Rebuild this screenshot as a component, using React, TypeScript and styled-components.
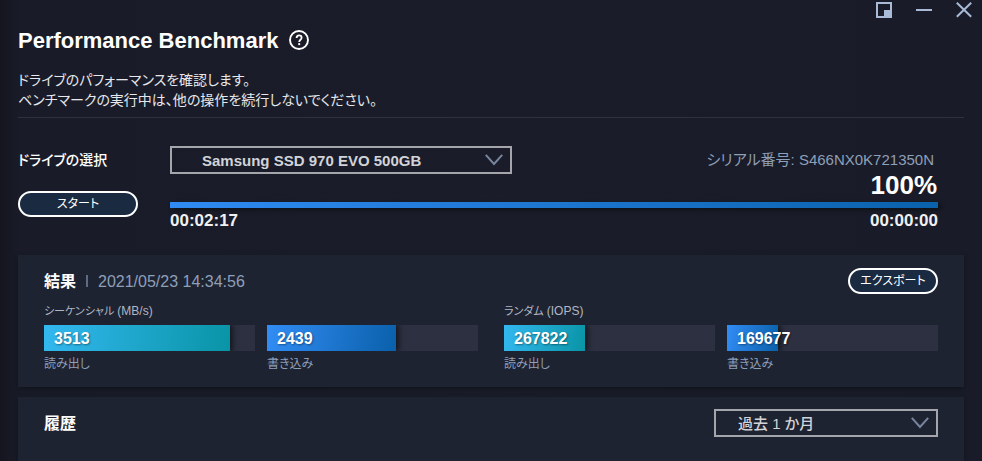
import React from "react";
import styled, { createGlobalStyle } from "styled-components";

const GlobalStyle = createGlobalStyle`
  *, *::before, *::after { box-sizing: border-box; }
  body {
    margin: 0;
    background: #191c28;
    color: #fff;
    font-family: "Liberation Sans", "Noto Sans CJK JP", sans-serif;
    font-feature-settings: "palt";
  }
  button, select { font: inherit; font-feature-settings: inherit; }
  h1, h2, h3, p { margin: 0; }
`;

const Window = styled.div`
  display: flex;
  flex-direction: column;
  min-height: 100vh;
  padding: 0 18px;
  background: linear-gradient(90deg, #15151f 0, #191c28 20px, #1a1d29 50%, #191c28 100%);
`;

const WindowBar = styled.div`
  display: flex;
  justify-content: flex-end;
  gap: 24px;
  height: 20px;
  margin-right: -8px;
  padding-top: 2px;
`;

const IconButton = styled.button`
  display: flex;
  align-items: center;
  padding: 0;
  border: 0;
  background: none;
  color: #a9bad6;
  cursor: pointer;
`;

const WindowButton = styled(IconButton)`
  height: 16px;
`;

const HelpButton = styled(IconButton)`
  height: 24px;
  color: #fff;
`;

const Header = styled.header`
  padding: 8px 0 7px;
  border-bottom: 1px solid #2e323d;
`;

const TitleRow = styled.div`
  display: flex;
  align-items: flex-start;
  gap: 11px;
  height: 24px;
  margin-bottom: 18px;
`;

const Title = styled.h1`
  font-size: 22px;
  line-height: 26px;
  font-weight: 700;
`;

const Description = styled.p`
  font-size: 14px;
  line-height: 20px;
  color: #e6e8ec;
`;

const Controls = styled.section`
  display: grid;
  grid-template-columns: 120px 1fr;
  column-gap: 32px;
  padding: 28px 26px 24px 0;
`;

const DriveLabel = styled.label`
  font-size: 14px;
  line-height: 28px;
  font-weight: 500;
`;

const DriveRow = styled.div`
  display: flex;
  justify-content: space-between;
  align-items: center;
`;

const Serial = styled.span`
  padding-right: 4px;
  font-size: 15px;
  line-height: 28px;
  color: #8e9fb8;
`;

const SelectBox = styled.div<{ $width: number }>`
  display: flex;
  position: relative;
  width: ${(p) => p.$width}px;
  height: 28px;

  svg {
    position: absolute;
    right: 8px;
    top: 8px;
    pointer-events: none;
  }
`;

const Select = styled.select<{ $inset: number; $weight: number }>`
  appearance: none;
  width: 100%;
  padding: 0 32px 0 ${(p) => p.$inset}px;
  border: 2px solid #a5a6ac;
  border-radius: 0;
  background: transparent;
  color: #d2d3d8;
  font-size: 15px;
  font-weight: ${(p) => p.$weight};

  option { background: #1e2332; }
`;

const PillButton = styled.button<{ $width: number }>`
  width: ${(p) => p.$width}px;
  height: 26px;
  padding: 0;
  border: 2px solid #fff;
  border-radius: 13px;
  background: #1a2b41;
  color: #fff;
  font-size: 12px;
  line-height: 22px;
  cursor: pointer;
`;

const StartCell = styled.div`
  padding-top: 17px;
`;

const Percent = styled.div`
  height: 28px;
  padding-right: 1px;
  font-size: 26px;
  line-height: 22px;
  font-weight: 700;
  text-align: right;
`;

const ProgressTrack = styled.div`
  height: 6px;
  background: #2c3040;
`;

const ProgressFill = styled.div`
  height: 100%;
  background: linear-gradient(90deg, #308af2, #0a62ad);
  box-shadow: 3px 2px 4px rgba(0, 0, 0, 0.45);
`;

const Times = styled.div`
  display: flex;
  justify-content: space-between;
  padding-top: 3px;
  font-size: 17px;
  line-height: 20px;
  font-weight: 700;
  color: #f0f0f2;
`;

const Panel = styled.section<{ $fill?: boolean }>`
  flex: ${(p) => (p.$fill ? "1 0 auto" : "none")};
  padding: ${(p) => (p.$fill ? "12px 26px 0" : "13px 26px 14px")};
  margin-bottom: ${(p) => (p.$fill ? 0 : 10)}px;
  background: #1e2332;
  box-shadow: 0 2px 5px rgba(0, 0, 0, 0.35);
`;

const PanelHeader = styled.div`
  display: flex;
  justify-content: space-between;
  align-items: center;
`;

const Heading = styled.div`
  display: flex;
  align-items: center;
  gap: 10px;
`;

const PanelTitle = styled.h2`
  padding-top: 2px;
  font-size: 16px;
  line-height: 24px;
  font-weight: 700;
`;

const Separator = styled.span`
  width: 2px;
  height: 12px;
  background: #5d6b84;
`;

const Stamp = styled.time`
  padding-top: 2px;
  font-size: 16px;
  line-height: 24px;
  color: #8e9fb8;
`;

const Groups = styled.div`
  display: grid;
  grid-template-columns: 1fr 1fr;
  gap: 26px;
  padding-top: 9px;
`;

const GroupTitle = styled.h3`
  height: 16px;
  margin-bottom: 6px;
  font-size: 11px;
  line-height: 16px;
  font-weight: 400;
  color: #b0b7c4;
`;

const Unit = styled.span`
  font-size: 12px;
`;

const Pair = styled.div`
  display: grid;
  grid-template-columns: 1fr 1fr;
  gap: 12px;
`;

const Track = styled.div`
  display: grid;
  grid-template-rows: 26px;
  background: #2c3040;
`;

const Fill = styled.div<{ $kind: Kind }>`
  grid-area: 1 / 1;
  background: ${(p) =>
    p.$kind === "read"
      ? "linear-gradient(100deg, #33b8f0, #0994a6)"
      : "linear-gradient(100deg, #328df5, #0a60aa)"};
  box-shadow: 3px 0 5px rgba(0, 0, 0, 0.5);
  clip-path: inset(0 -10px 0 0);
`;

const Value = styled.span`
  z-index: 1;
  grid-area: 1 / 1;
  padding-left: 10px;
  font-size: 16px;
  line-height: 28px;
  font-weight: 700;
  text-shadow: 1px 1px 2px rgba(0, 0, 0, 0.4);
`;

const Caption = styled.div`
  padding-top: 5px;
  font-size: 12px;
  line-height: 17px;
  color: #8e9fb8;
`;

type Kind = "read" | "write";

type Group = {
  title: string;
  unit: string;
  bars: { kind: Kind; value: string; percent: number }[];
};

const groups: Group[] = [
  {
    title: "シーケンシャル",
    unit: "(MB/s)",
    bars: [
      { kind: "read", value: "3513", percent: 88 },
      { kind: "write", value: "2439", percent: 61 },
    ],
  },
  {
    title: "ランダム",
    unit: "(IOPS)",
    bars: [
      { kind: "read", value: "267822", percent: 38.4 },
      { kind: "write", value: "169677", percent: 24.2 },
    ],
  },
];

const captions: Record<Kind, string> = { read: "読み出し", write: "書き込み" };

const Chevron = () => (
  <svg width="20" height="12" viewBox="0 0 20 12" fill="none" stroke="#77859d" strokeWidth="2" aria-hidden="true">
    <path d="M1.8 .8 10 10 18.2 .8" />
  </svg>
);

export default function App() {
  return (
    <>
      <GlobalStyle />
      <Window>
        <WindowBar>
          <WindowButton aria-label="ミニモード">
            <svg width="16" height="16" viewBox="0 0 16 16">
              <path d="M1 1h14v14H1z" fill="none" stroke="currentColor" strokeWidth="2" />
              <path d="M8 8h7v7H8z" fill="currentColor" />
            </svg>
          </WindowButton>
          <WindowButton aria-label="最小化">
            <svg width="16" height="16" viewBox="0 0 16 16">
              <path d="M0 7h16v2H0z" fill="currentColor" />
            </svg>
          </WindowButton>
          <WindowButton aria-label="閉じる">
            <svg width="16" height="16" viewBox="0 0 16 16" fill="none" stroke="currentColor" strokeWidth="2">
              <path d="M.8 .8 15.2 14.8M15.2 .8 .8 14.8" />
            </svg>
          </WindowButton>
        </WindowBar>

        <Header>
          <TitleRow>
            <Title>Performance Benchmark</Title>
            <HelpButton aria-label="ヘルプ">
              <svg width="20" height="20" viewBox="0 0 20 20" fill="none" stroke="currentColor">
                <circle cx="10" cy="10" r="9" strokeWidth="1.9" />
                <path d="M7.6 8C7.6 6.3 8.6 5.4 10.1 5.4s2.5.9 2.5 2.3c0 2-2.4 2.1-2.4 4.3" strokeWidth="1.8" />
                <path d="M10.2 13.1v2" strokeWidth="1.9" />
              </svg>
            </HelpButton>
          </TitleRow>
          <Description>ドライブのパフォーマンスを確認します。</Description>
          <Description>ベンチマークの実行中は、他の操作を続行しないでください。</Description>
        </Header>

        <Controls>
          <DriveLabel htmlFor="drive">ドライブの選択</DriveLabel>
          <DriveRow>
            <SelectBox $width={342}>
              <Select id="drive" $inset={30} $weight={700}>
                <option>Samsung SSD 970 EVO 500GB</option>
              </Select>
              <Chevron />
            </SelectBox>
            <Serial>シリアル番号: S466NX0K721350N</Serial>
          </DriveRow>
          <StartCell>
            <PillButton $width={120}>スタート</PillButton>
          </StartCell>
          <div>
            <Percent>100%</Percent>
            <ProgressTrack role="progressbar" aria-valuenow={100} aria-label="進行状況">
              <ProgressFill />
            </ProgressTrack>
            <Times>
              <span>00:02:17</span>
              <span>00:00:00</span>
            </Times>
          </div>
        </Controls>

        <Panel>
          <PanelHeader>
            <Heading>
              <PanelTitle>結果</PanelTitle>
              <Separator />
              <Stamp>2021/05/23 14:34:56</Stamp>
            </Heading>
            <PillButton $width={90}>エクスポート</PillButton>
          </PanelHeader>
          <Groups>
            {groups.map((group) => (
              <div key={group.title}>
                <GroupTitle>
                  {group.title} <Unit>{group.unit}</Unit>
                </GroupTitle>
                <Pair>
                  {group.bars.map((bar) => (
                    <div key={bar.kind}>
                      <Track>
                        <Fill $kind={bar.kind} style={{ width: `${bar.percent}%` }} />
                        <Value>{bar.value}</Value>
                      </Track>
                      <Caption>{captions[bar.kind]}</Caption>
                    </div>
                  ))}
                </Pair>
              </div>
            ))}
          </Groups>
        </Panel>

        <Panel $fill>
          <PanelHeader>
            <PanelTitle>
              <label htmlFor="period">履歴</label>
            </PanelTitle>
            <SelectBox $width={224}>
              <Select id="period" $inset={22} $weight={500}>
                <option>過去 1 か月</option>
              </Select>
              <Chevron />
            </SelectBox>
          </PanelHeader>
        </Panel>
      </Window>
    </>
  );
}
